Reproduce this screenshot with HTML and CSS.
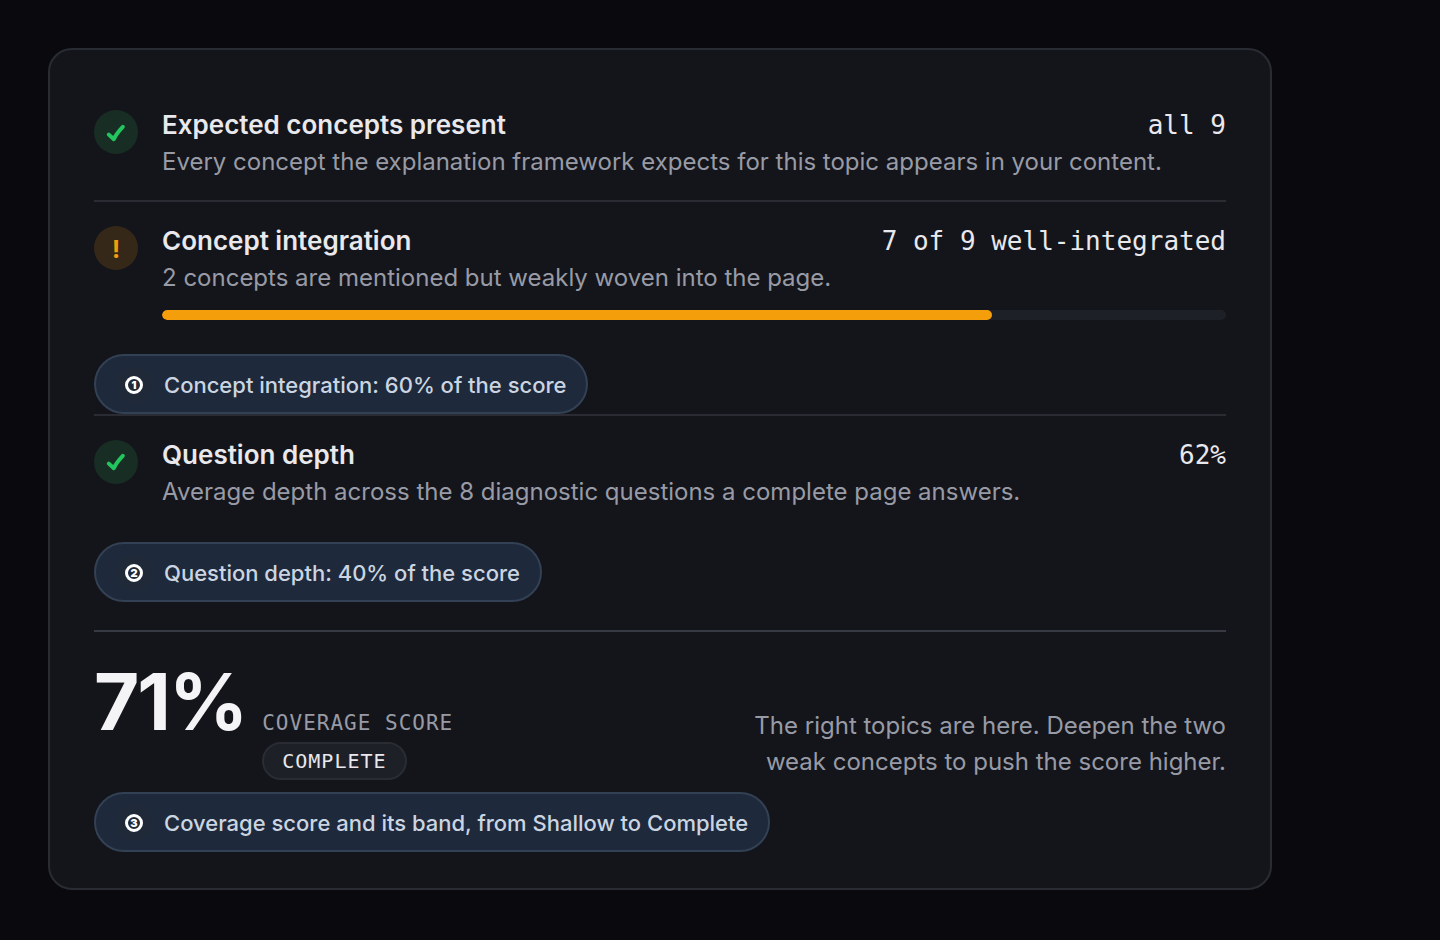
FILE: index.html
```html
<!DOCTYPE html>
<html lang="en">
<head>
    <meta charset="UTF-8">
    <meta name="viewport" content="width=device-width, initial-scale=1.0">
    <title>Coverage Score</title>
    <link rel="stylesheet" href="styles.css">
</head>
<body>
    <main class="card">
        <!-- Checks -->
        <section class="check">
            <div class="check-icon pass">
                <svg viewBox="0 0 44 44" aria-hidden="true"><path d="M14.8 24.6 L19.8 29.2 Q22 24 28.8 16.8"/></svg>
            </div>
            <div class="check-body">
                <div class="check-head">
                    <h2>Expected concepts present</h2>
                    <span class="value">all 9</span>
                </div>
                <p>Every concept the explanation framework expects for this topic appears in your content.</p>
            </div>
        </section>

        <section class="check">
            <div class="check-icon warn">!</div>
            <div class="check-body">
                <div class="check-head">
                    <h2>Concept integration</h2>
                    <span class="value">7 of 9 well-integrated</span>
                </div>
                <p>2 concepts are mentioned but weakly woven into the page.</p>
                <div class="bar"><div class="bar-fill" style="width: 78%;"></div></div>
            </div>
        </section>
        <div class="note"><span class="badge"><b>1</b></span>Concept integration: 60% of the score</div>

        <section class="check">
            <div class="check-icon pass">
                <svg viewBox="0 0 44 44" aria-hidden="true"><path d="M14.8 23.6 L19.8 28.2 Q22 23 28.8 15.8"/></svg>
            </div>
            <div class="check-body">
                <div class="check-head">
                    <h2>Question depth</h2>
                    <span class="value">62%</span>
                </div>
                <p>Average depth across the 8 diagnostic questions a complete page answers.</p>
            </div>
        </section>
        <div class="note"><span class="badge"><b>2</b></span>Question depth: 40% of the score</div>

        <!-- Total -->
        <section class="total">
            <div class="score">
                <strong>71%</strong>
                <div class="score-info">
                    <span class="score-label">COVERAGE SCORE</span>
                    <span class="band">COMPLETE</span>
                </div>
            </div>
            <p>The right topics are here. Deepen the two weak concepts to push the score higher.</p>
        </section>
        <div class="note"><span class="badge"><b>3</b></span>Coverage score and its band, from Shallow to Complete</div>
    </main>
</body>
</html>
```
FILE: styles.css
```css
* {
    box-sizing: border-box;
}

body {
    margin: 0;
    padding: 48px;
    font-family: Inter, sans-serif;
    font-size: 24px;
    line-height: 32px;
    color: #e8e8ed;
    background-color: #09090e;
}

h2, p {
    margin: 0;
}

h2 {
    font-size: 26px;
    line-height: 34px;
    font-weight: 600;
}

p {
    color: #989ba6;
}

.card {
    max-width: 1224px;
    padding: 36px 44px;
    background-color: #14151a;
    border: 2px solid #2a2c34;
    border-radius: 24px;
}

.check {
    display: flex;
    gap: 24px;
    padding: 22px 0;
}

.check ~ .check {
    border-top: 2px solid #2a2b33;
}

.check-icon {
    flex: none;
    width: 44px;
    height: 44px;
    margin-top: 2px;
    border-radius: 50%;
}

.check-icon svg {
    display: block;
    fill: none;
    stroke: #22c55e;
    stroke-width: 4;
    stroke-linecap: round;
    stroke-linejoin: round;
}

.pass {
    background-color: #182d24;
}

.warn {
    padding-top: 2px;
    background-color: #352819;
    color: #f59e0b;
    font-weight: 700;
    line-height: 44px;
    text-align: center;
}

.check-body {
    flex: 1;
}

.check-head {
    display: flex;
    justify-content: space-between;
    margin-bottom: 4px;
}

.value {
    font-family: "DejaVu Sans Mono", monospace;
    font-size: 26px;
    line-height: 34px;
}

.bar {
    height: 10px;
    margin-top: 16px;
    background-color: #1e2027;
    border-radius: 5px;
    overflow: hidden;
}

.bar-fill {
    height: 100%;
    background-color: #f59e0b;
    border-radius: 5px;
}

.note {
    display: flex;
    align-items: center;
    gap: 12px;
    width: fit-content;
    margin-top: 12px;
    padding: 11px 20px 9px;
    background-color: #1e293b;
    border: 2px solid #334155;
    border-radius: 30px;
    color: #cbd5e1;
    font-size: 22px;
    font-weight: 500;
}

.badge {
    display: grid;
    place-items: center;
    width: 36px;
    height: 36px;
    background-color: #1f2937;
    border-radius: 50%;
}

.badge b {
    width: 18px;
    height: 18px;
    border: 3px solid #ffffff;
    border-radius: 50%;
    color: #ffffff;
    font-size: 11px;
    font-weight: 900;
    line-height: 12px;
    text-align: center;
}

.total {
    display: flex;
    justify-content: space-between;
    align-items: flex-end;
    margin-top: 28px;
    padding-top: 28px;
    border-top: 2px solid #373a42;
}

.total p {
    max-width: 480px;
    line-height: 36px;
    text-align: right;
}

.score {
    display: flex;
    align-items: baseline;
    gap: 16px;
}

.score strong {
    color: #f4f4f6;
    font-size: 78px;
    font-weight: 700;
    line-height: 84px;
    letter-spacing: -2px;
}

.score-info {
    display: flex;
    flex-direction: column;
    align-items: flex-start;
    gap: 6px;
    font-family: "DejaVu Sans Mono", monospace;
    line-height: 26px;
    letter-spacing: 1px;
}

.score-label {
    color: #989ba6;
    font-size: 21px;
}

.band {
    padding: 4px 18px;
    background-color: #1e2027;
    border: 2px solid #2a2c34;
    border-radius: 19px;
    font-size: 20px;
}
```
